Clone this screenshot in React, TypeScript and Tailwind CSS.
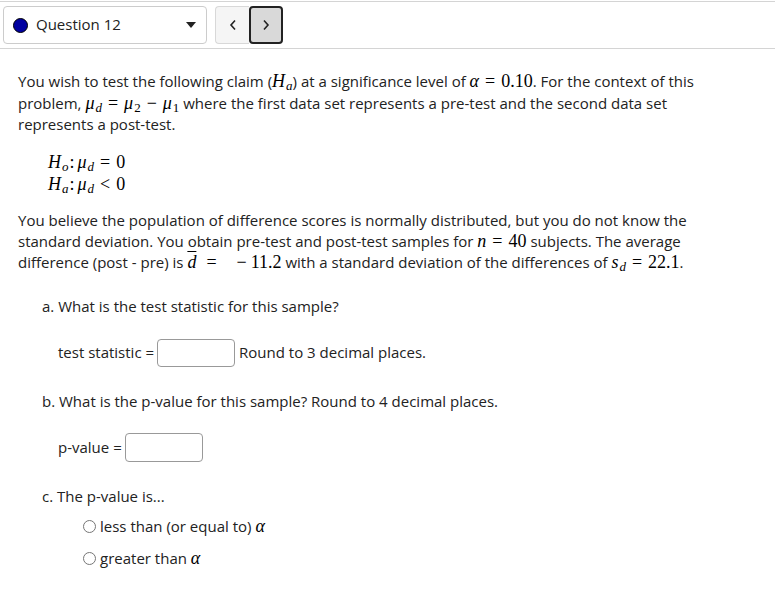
import React from 'react';

const serif = "font-['Liberation_Serif','DejaVu_Serif',serif] text-black";

function I({ children }: { children: React.ReactNode }) {
  return <span className={`${serif} italic text-[18px] leading-none`}>{children}</span>;
}

function N({ children }: { children: React.ReactNode }) {
  return <span className={`${serif} text-[18px] leading-none`}>{children}</span>;
}

function Sub({ children, italic = true }: { children: React.ReactNode; italic?: boolean }) {
  return (
    <span className={`${serif} ${italic ? 'italic' : ''} text-[13px] leading-none align-[-3px] ml-[1px]`}>
      {children}
    </span>
  );
}

function Op({ children }: { children: React.ReactNode }) {
  return <span className={`${serif} text-[18px] leading-none mx-[6px]`}>{children}</span>;
}

function Radio({ children }: { children: React.ReactNode }) {
  return (
    <label className="flex items-center h-[22px]">
      <span className="w-[13px] h-[13px] rounded-full border border-[#767676] bg-white mr-[4px]" />
      <span>{children}</span>
    </label>
  );
}

export default function App() {
  return (
    <div className="w-[775px] h-[602px] bg-white font-['Open_Sans',sans-serif] text-[15px] text-[#222]">
      <div className="mt-[1px] border-t border-b border-[#d4d4d4] flex items-center pl-[3px] pt-[4px] pb-[4px]">
        <div className="w-[204px] h-[38px] border border-[#ccc] rounded-[4px] flex items-center pl-[9px] pr-[9px]">
          <span className="w-[15px] h-[15px] rounded-full bg-[#0000a0] border border-black mr-[8px]" />
          <span className="flex-1 text-[#222] -mt-[1px]">Question 12</span>
          <svg width="10" height="7" viewBox="0 0 10 7" className="mr-[1px]">
            <polygon points="0,0 10,0 5,6" fill="#222" />
          </svg>
        </div>
        <div className="ml-[8px] flex">
          <button className="w-[34px] h-[38px] border border-[#d8d8d8] border-r-0 rounded-l-[4px] bg-[#f5f5f5] flex items-center justify-center">
            <svg width="8" height="12" viewBox="0 0 8 12">
              <path d="M6 1.5 L2 6 L6 10.5" stroke="#222" strokeWidth="1.6" fill="none" />
            </svg>
          </button>
          <button className="w-[34px] h-[38px] border-2 border-[#222] rounded-[4px] bg-[#d9d9d9] flex items-center justify-center">
            <svg width="8" height="12" viewBox="0 0 8 12">
              <path d="M2 1.5 L6 6 L2 10.5" stroke="#222" strokeWidth="1.6" fill="none" />
            </svg>
          </button>
        </div>
      </div>

      <div className="pl-[18px] w-[712px]">
        <p className="mt-[22px] leading-[21.5px]">
          You wish to test the following claim (<I>H</I><Sub>a</Sub>) at a significance level of <I>α</I>
          <Op>=</Op><N>0.10</N>. For the context of this problem, <I>μ</I><Sub>d</Sub><Op>=</Op><I>μ</I>
          <Sub italic={false}>2</Sub><Op>−</Op><I>μ</I><Sub italic={false}>1</Sub> where the first data set represents a pre-test and the second data set represents a post-test.
        </p>

        <div className="mt-[15px] ml-[30px] leading-[22px]">
          <div>
            <I>H</I><Sub>o</Sub><span className={`${serif} text-[18px] leading-none ml-[1px] mr-[3px]`}>:</span><I>μ</I><Sub>d</Sub><Op>=</Op><N>0</N>
          </div>
          <div>
            <I>H</I><Sub>a</Sub><span className={`${serif} text-[18px] leading-none ml-[1px] mr-[3px]`}>:</span><I>μ</I><Sub>d</Sub><Op>&lt;</Op><N>0</N>
          </div>
        </div>

        <p className="mt-[15px] leading-[21px]">
          You believe the population of difference scores is normally distributed, but you do not know the standard deviation. You obtain pre-test and post-test samples for <I>n</I><Op>=</Op><N>40</N> subjects. The average difference (post - pre) is{' '}
          <I><span className="overline decoration-1">d</span></I>
          <span className={`${serif} text-[18px] leading-none ml-[10px] mr-[20px]`}>=</span>
          <span className={`${serif} text-[18px] leading-none mr-[4px]`}>−</span>
          <N>11.2</N> with a standard deviation of the differences of <I>s</I><Sub>d</Sub><Op>=</Op><N>22.1</N>.
        </p>

        <div className="pl-[24px]">
          <p className="mt-[22px] leading-[22px]">a. What is the test statistic for this sample?</p>

          <div className="mt-[22px] ml-[16px] flex items-center h-[28px]">
            <span>test statistic =</span>
            <input className="ml-[3px] w-[78px] h-[28px] border border-[#999] rounded-[4px] bg-white" />
            <span className="ml-[4px]">Round to 3 decimal places.</span>
          </div>

          <p className="mt-[23px] leading-[22px]">b. What is the p-value for this sample? Round to 4 decimal places.</p>

          <div className="mt-[22px] ml-[16px] flex items-center h-[28px]">
            <span>p-value =</span>
            <input className="ml-[3px] w-[78px] h-[29px] border border-[#999] rounded-[4px] bg-white" />
          </div>

          <p className="mt-[23px] leading-[22px]">c. The p-value is...</p>

          <div className="mt-[9px] ml-[41px] flex flex-col gap-[10px]">
            <Radio>
              less than (or equal to) <I>α</I>
            </Radio>
            <Radio>
              greater than <I>α</I>
            </Radio>
          </div>
        </div>
      </div>
    </div>
  );
}
